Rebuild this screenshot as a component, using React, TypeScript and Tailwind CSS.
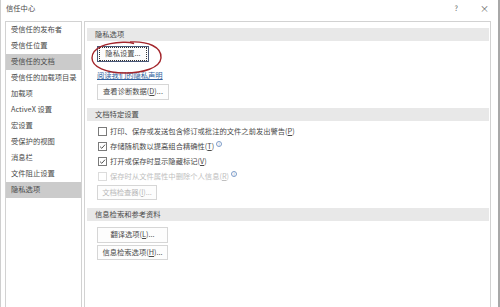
import React from "react";

const font = { fontFamily: '"Noto Sans CJK SC", "Noto Sans", sans-serif' };

const navItems = [
  { label: "受信任的发布者" },
  { label: "受信任位置" },
  { label: "受信任的文档", active: true },
  { label: "受信任的加载项目录" },
  { label: "加载项" },
  { label: "ActiveX 设置" },
  { label: "宏设置" },
  { label: "受保护的视图" },
  { label: "消息栏" },
  { label: "文件阻止设置" },
  { label: "隐私选项", active: true },
];

function SectionBar({ title, className = "" }: { title: string; className?: string }) {
  return (
    <div className={`h-[13px] bg-[#e8e8e8] pl-[8px] flex items-center text-[7.3px] leading-none text-[#4a4a4a] ${className}`}>
      {title}
    </div>
  );
}

function Button({
  children,
  className = "",
  disabled = false,
  focused = false,
}: {
  children: React.ReactNode;
  className?: string;
  disabled?: boolean;
  focused?: boolean;
}) {
  return (
    <div
      className={`flex items-center justify-center border bg-[#fdfdfd] text-[7.3px] leading-none ${
        focused ? "border-[#4a5a7a]" : "border-[#d6d6d6]"
      } ${disabled ? "text-[#b8b8b8]" : "text-[#4a4a4a]"} ${className}`}
    >
      {focused ? (
        <div className="w-full h-full m-[1px] border border-dotted border-[#333] flex items-center justify-center">
          {children}
        </div>
      ) : (
        children
      )}
    </div>
  );
}

function Info() {
  return (
    <span className="ml-[2px] -mt-[5px] inline-flex w-[6px] h-[6px] rounded-full border border-[#7d9cc8] text-[4px] leading-none text-[#7d9cc8] items-center justify-center">
      i
    </span>
  );
}

function Checkbox({ checked, disabled }: { checked?: boolean; disabled?: boolean }) {
  return (
    <span
      className={`w-[9px] h-[9px] border bg-white flex items-center justify-center shrink-0 ${
        disabled ? "border-[#dcdcdc]" : "border-[#7a7a7a]"
      }`}
    >
      {checked && (
        <svg width="7" height="7" viewBox="0 0 10 10">
          <path d="M1.5 5.2 L4 7.6 L8.6 2.4" fill="none" stroke="#444" strokeWidth="1.3" />
        </svg>
      )}
    </span>
  );
}

function CheckRow({
  children,
  checked,
  disabled,
}: {
  children: React.ReactNode;
  checked?: boolean;
  disabled?: boolean;
}) {
  return (
    <div
      className={`h-[15px] pl-[11px] flex items-center gap-[3px] text-[7.3px] leading-none whitespace-nowrap ${
        disabled ? "text-[#c0c0c0]" : "text-[#4a4a4a]"
      }`}
    >
      <Checkbox checked={checked} disabled={disabled} />
      <span className="flex items-center">{children}</span>
    </div>
  );
}

export default function App() {
  return (
    <div style={font} className="relative w-[500px] h-[307px] overflow-hidden bg-white border-l border-[#cfcfcf] border-r-2 border-r-[#a8a8a8]">
      <div className="h-[21px] flex items-center pl-[5px] pr-[9px] text-[7.3px] text-[#4a4a4a]">
        <span className="-mt-[4px]">信任中心</span>
        <span className="ml-auto -mt-[4px] text-[#666]">?</span>
        <span className="ml-[22px] -mt-[4px] text-[9px] text-[#666]">×</span>
      </div>

      <div className="flex pl-[4px] gap-[2px] h-[286px]">
        <div className="w-[77px] border border-[#d2d2d2] border-b-0">
          {navItems.map((item) => (
            <div
              key={item.label}
              className={`h-[16px] pl-[5px] flex items-center text-[7.3px] leading-none text-[#4a4a4a] whitespace-nowrap ${
                item.active ? "bg-[#cbcbcb]" : ""
              }`}
            >
              {item.label}
            </div>
          ))}
        </div>

        <div className="w-[407px] border border-[#d2d2d2] border-b-0 pl-[2px] pr-[1px] pt-[6px] flex flex-col">
          <SectionBar title="隐私选项" />
          <div className="pl-[10px] flex flex-col items-start">
            <Button focused className="mt-[5px] w-[52px] h-[16px]">
              隐私设置...
            </Button>
            <div className="mt-[7px] h-[14px] flex items-center text-[7.3px] leading-none text-[#2f5f9e] underline">
              阅读我们的隐私声明
            </div>
            <Button className="mt-[1px] w-[72px] h-[16px]">
              <span>
                查看诊断数据(<span className="underline">D</span>)...
              </span>
            </Button>
          </div>

          <SectionBar title="文档特定设置" className="mt-[8px]" />
          <div className="mt-[3px] flex flex-col">
            <CheckRow>
              打印、保存或发送包含修订或批注的文件之前发出警告(<span className="underline">P</span>)
            </CheckRow>
            <CheckRow checked>
              存储随机数以提高组合精确性(<span className="underline">T</span>)
              <Info />
            </CheckRow>
            <CheckRow checked>
              打开或保存时显示隐藏标记(<span className="underline">V</span>)
            </CheckRow>
            <CheckRow disabled>
              保存时从文件属性中删除个人信息(<span className="underline">R</span>)
              <Info />
            </CheckRow>
          </div>
          <div className="pl-[10px] flex flex-col items-start">
            <Button disabled className="mt-[1px] w-[60px] h-[15px]">
              <span>
                文档检查器(<span className="underline">I</span>)...
              </span>
            </Button>
          </div>

          <SectionBar title="信息检索和参考资料" className="mt-[8px] h-[12px]" />
          <div className="pl-[10px] flex flex-col items-start">
            <Button className="mt-[6px] w-[71px] h-[16px]">
              <span>
                翻译选项(<span className="underline">L</span>)...
              </span>
            </Button>
            <Button className="mt-[2px] w-[71px] h-[15px]">
              <span>
                信息检索选项(<span className="underline">H</span>)...
              </span>
            </Button>
          </div>
        </div>
      </div>

      <svg className="absolute left-[87px] top-[38px]" width="78" height="38" viewBox="0 0 78 38">
        <path
          d="M42 4 C60 3 74 9 73 20 C72 30 55 35 37 35 C18 35 4 29 4 20 C4 10 17 5 35 4.3 C39 4.1 43 4.5 46 5.6"
          fill="none"
          stroke="#a3252b"
          strokeWidth="1.4"
        />
      </svg>
    </div>
  );
}
